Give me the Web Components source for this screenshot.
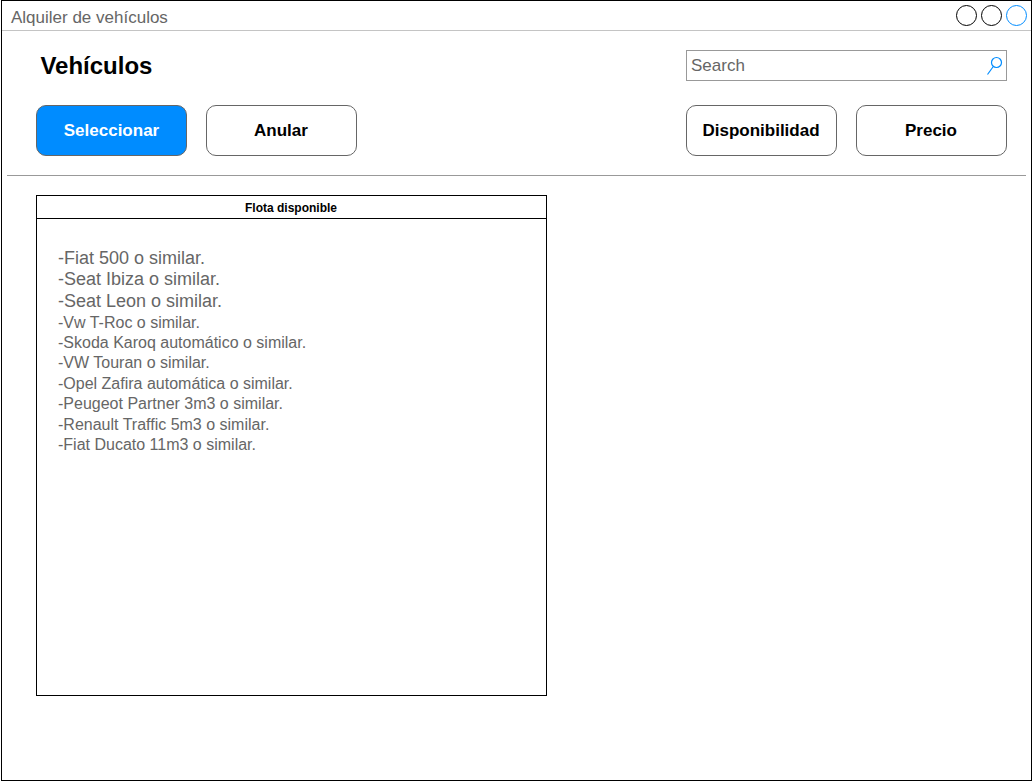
<!DOCTYPE html>
<html lang="es">
<head>
<meta charset="utf-8">
<title>Alquiler de vehículos</title>
<style>
body { margin: 0; background: #fff; font-family: "Liberation Sans", Arial, sans-serif; }
</style>
</head>
<body>
<rental-window heading="Alquiler de vehículos">
  <page-header heading="Vehículos">
    <search-field slot="search" placeholder="Search"></search-field>
    <action-button slot="left" primary>Seleccionar</action-button>
    <action-button slot="left">Anular</action-button>
    <action-button slot="right">Disponibilidad</action-button>
    <action-button slot="right">Precio</action-button>
  </page-header>
  <fleet-panel heading="Flota disponible">
    <fleet-item large>-Fiat 500 o similar.</fleet-item>
    <fleet-item large>-Seat Ibiza o similar.</fleet-item>
    <fleet-item large>-Seat Leon o similar.</fleet-item>
    <fleet-item>-Vw T-Roc o similar.</fleet-item>
    <fleet-item>-Skoda Karoq automático o similar.</fleet-item>
    <fleet-item>-VW Touran o similar.</fleet-item>
    <fleet-item>-Opel Zafira automática o similar.</fleet-item>
    <fleet-item>-Peugeot Partner 3m3 o similar.</fleet-item>
    <fleet-item>-Renault Traffic 5m3 o similar.</fleet-item>
    <fleet-item>-Fiat Ducato 11m3 o similar.</fleet-item>
  </fleet-panel>
</rental-window>
<script>
const define = (name, markup) => customElements.define(name, class extends HTMLElement {
  constructor() {
    super();
    this.attachShadow({ mode: 'open' }).innerHTML = markup;
  }
  connectedCallback() {
    const label = this.shadowRoot.querySelector('[data-label]');
    if (label) label.textContent = this.getAttribute('heading') || this.getAttribute('placeholder');
  }
});

define('rental-window', `
<style>
:host { display: block; box-sizing: border-box; width: 1031px; height: 781px; margin-left: 1px; border: 1px solid #000; }
.bar { display: flex; box-sizing: border-box; height: 30px; align-items: flex-start; justify-content: space-between; padding: 3px 4px 0 9px; border-bottom: 1px solid #c4c4c4; font-size: 17px; line-height: 20px; color: #666; }
.bar span { padding-top: 4px; }
svg { display: block; }
</style>
<div class="bar"><span data-label></span>
<svg width="72" height="22" viewBox="0 0 72 22" fill="none" stroke="#000"><circle cx="11.5" cy="11.5" r="10"/><circle cx="36.5" cy="11.5" r="10"/><circle cx="61.5" cy="11.5" r="10" stroke="#008cff"/></svg></div>
<slot></slot>`);

define('page-header', `
<style>
:host { display: block; box-sizing: border-box; height: 145px; margin: 0 5px 19px; padding: 19px 19px 0 29px; border-bottom: 1px solid #999; }
.row { display: flex; justify-content: space-between; }
h1 { margin: 0; padding-left: 4.4px; font-size: 24px; line-height: 31px; font-weight: bold; color: #000; }
.actions { margin-top: 24px; }
.group { display: flex; gap: 19px; }
</style>
<div class="row"><h1 data-label></h1><slot name="search"></slot></div>
<div class="row actions"><div class="group"><slot name="left"></slot></div><div class="group"><slot name="right"></slot></div></div>`);

define('search-field', `
<style>
:host { display: flex; box-sizing: border-box; width: 321px; height: 31px; align-items: center; justify-content: space-between; border: 1px solid #999; padding: 0 3px 0 4px; font-size: 17px; line-height: 20px; color: #666; }
</style>
<span data-label></span>
<svg width="18" height="21" viewBox="0 0 18 21" fill="none" stroke="#008cff" stroke-width="1.2"><circle cx="11.5" cy="7.5" r="5"/><path d="M8.3 11.5 2.5 19.5"/></svg>`);

define('action-button', `
<style>
:host { display: flex; box-sizing: border-box; width: 151px; height: 51px; align-items: center; justify-content: center; padding-right: 1px; border: 1px solid #666; border-radius: 10px; font-size: 17px; line-height: 20px; font-weight: bold; color: #000; }
:host([primary]) { background: #008cff; color: #fff; padding-right: 0; }
</style>
<slot></slot>`);

define('fleet-panel', `
<style>
:host { display: block; box-sizing: border-box; width: 511px; height: 501px; margin-left: 34px; border: 1px solid #000; }
h2 { margin: 0; border-bottom: 1px solid #000; padding: 1px 1px 0 0; height: 21px; text-align: center; font-size: 12px; line-height: 22px; color: #000; }
.list { padding: 28.8px 21px; }
</style>
<h2 data-label></h2><div class="list"><slot></slot></div>`);

define('fleet-item', `
<style>
:host { display: block; font-size: 16px; line-height: 20.4px; color: #666; white-space: nowrap; }
:host([large]) { font-size: 18px; line-height: 21.6px; }
</style>
<slot></slot>`);
</script>
</body>
</html>
